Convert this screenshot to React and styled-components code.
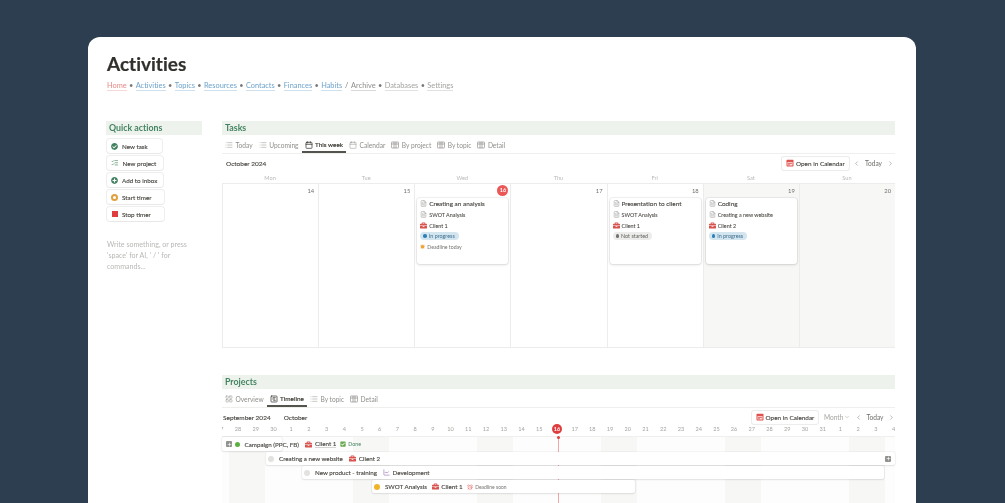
import React from "react";
import styled, { createGlobalStyle } from "styled-components";
import {
  List,
  FileText,
  Calendar as CalendarIcon,
  ChevronLeft,
  ChevronRight,
  ChevronDown,
  LayoutGrid,
  SquareChartGantt,
  ListChecks,
  ChartLine,
  Plus,
  AlarmClock,
} from "lucide-react";
import { FaBriefcase, FaCheckCircle, FaPlusCircle, FaCheckSquare } from "react-icons/fa";

const GlobalStyle = createGlobalStyle`
  html, body {
    margin: 0;
    height: 503px;
    overflow: hidden;
    background: #2c3e50;
    font-family: Lato, "Noto Sans", sans-serif;
    font-variant-ligatures: none;
    color: #37352f;
  }
`;

const Page = styled.div`
  padding: 37px 89px 0 88px;
`;

const Sheet = styled.main`
  background: #fff;
  border-radius: 12px 12px 0 0;
  padding: 15px 21px 0 18px;
  height: 451px;
  overflow: hidden;
`;

// no background of its own, so small text gets plain grey antialiasing
const TextLayer = styled.div`
  will-change: transform;
`;

const Title = styled.h1`
  margin: 0 0 0 1px;
  font-size: 19px;
  line-height: 24px;
  font-weight: 700;
  color: #32302c;
  -webkit-text-stroke: 0.2px #32302c;
`;

const Crumbs = styled.nav`
  display: flex;
  align-items: center;
  margin: 4px 0 0 1px;
  height: 11px;
  font-size: 7.4px;
`;

const Crumb = styled.a`
  color: ${(p) => p.$color};
  border-bottom: 1px solid ${(p) => p.$color}55;
  line-height: 9px;
`;

const Sep = styled.span`
  color: #777;
  width: 9px;
  text-align: center;
`;

const Columns = styled.div`
  display: flex;
  gap: 20px;
  margin-top: 30px;
`;

const Sidebar = styled.aside`
  width: 96px;
  flex: none;
`;

const Content = styled.div`
  flex: 1;
  min-width: 0;
`;

const Heading = styled.h2`
  margin: 0;
  height: 14px;
  padding-left: 3px;
  background: #edf3ec;
  color: #448361;
  font-size: 8.8px;
  line-height: 14.5px;
  font-weight: 700;
`;

const ActionList = styled.div`
  display: flex;
  flex-direction: column;
  align-items: flex-start;
  gap: 3px;
  margin: 4px 0 0 1px;
`;

const ActionButton = styled.button`
  display: flex;
  align-items: center;
  gap: 4px;
  height: 14px;
  width: ${(p) => p.$width}px;
  padding: 0 0 0 4px;
  border: 0;
  border-radius: 3px;
  background: #fff;
  box-shadow: 0 0 0 1px rgba(15, 15, 15, 0.07), 0 1px 1px rgba(15, 15, 15, 0.03);
  font: 400 6.3px Lato, sans-serif;
  -webkit-text-stroke: 0.12px #4a4843;
  color: #4a4843;
`;

const TimerRing = styled.span`
  width: 7px;
  height: 7px;
  border-radius: 50%;
  border: 2px solid #e2a03f;
  box-sizing: border-box;
  background: #fff;
`;

const StopSquare = styled.span`
  width: 6px;
  height: 6px;
  margin: 0 0.5px;
  background: #e03e3e;
`;

const Hint = styled.p`
  margin: 18px 0 0 1px;
  font-size: 7.1px;
  line-height: 11px;
  color: #b9b8b5;
`;

const Tabs = styled.div`
  display: flex;
  height: 15px;
  margin-top: 3px;
  border-bottom: 1px solid #efefee;
`;

const Tab = styled.div`
  display: flex;
  align-items: center;
  gap: 2.5px;
  height: 15px;
  padding: 0 3px 2px;
  box-sizing: border-box;
  font-size: ${(p) => (p.$active ? 6.4 : 6.6)}px;
  color: ${(p) => (p.$active ? "#37352f" : "#8f8e8b")};
  -webkit-text-stroke: ${(p) => (p.$active ? "0.15px #37352f" : "0")};
  box-shadow: ${(p) => (p.$active ? "inset 0 -2px 0 #55534e" : "none")};
`;

const MonthBar = styled.div`
  display: flex;
  align-items: center;
  justify-content: space-between;
  height: 14px;
  margin-top: ${(p) => p.$top}px;
  padding: 0 ${(p) => p.$right}px 0 ${(p) => p.$left}px;
`;

const MonthLabels = styled.div`
  display: flex;
  gap: 13px;
  font-size: 6.5px;
  -webkit-text-stroke: 0.12px #4a4843;
  color: #4a4843;
`;

const MonthTools = styled.div`
  display: flex;
  align-items: center;
  gap: 4.5px;
  font-size: 6.6px;
  color: #6f6e69;
`;

const CalendarButton = styled.button`
  display: flex;
  align-items: center;
  gap: 2px;
  height: 13px;
  padding: 0 4px;
  border: 0;
  border-radius: 2px;
  background: #fff;
  box-shadow: 0 0 0 1px rgba(15, 15, 15, 0.08);
  font: 400 6.4px Lato, sans-serif;
  -webkit-text-stroke: 0.12px #4a4843;
  color: #4a4843;
`;

const ViewSelect = styled.span`
  display: flex;
  align-items: center;
  gap: 1px;
  margin-left: 1px;
  color: #a5a4a0;
`;

const WeekHead = styled.div`
  display: grid;
  grid-template-columns: repeat(7, 1fr);
  height: 12px;
  margin-top: 1px;
  font-size: 5.6px;
  line-height: 14px;
  text-align: center;
  color: #b9b8b5;
`;

const WeekGrid = styled.div`
  display: grid;
  grid-template-columns: repeat(7, 1fr);
  height: 165px;
  border-top: 1px solid #ececea;
  border-bottom: 1px solid #ececea;
  box-sizing: border-box;
`;

const DayCell = styled.div`
  border-left: 1px solid #ececea;
  background: ${(p) => (p.$weekend ? "#f7f7f5" : "#fff")};
  padding: 0 2px;
  min-width: 0;
`;

const DayNumber = styled.div`
  display: flex;
  justify-content: flex-end;
  align-items: center;
  height: 12px;
  margin-bottom: 2px;
  padding-right: 2px;
  font-size: 5.8px;
  color: #6f6e69;
`;

const TodayBadge = styled.span`
  display: flex;
  align-items: center;
  justify-content: center;
  width: 11px;
  height: 11px;
  margin-right: -2px;
  border-radius: 50%;
  background: #eb5757;
  color: #fff;
  font-size: 5.4px;
  font-weight: 700;
`;

const TaskCard = styled.article`
  height: 66px;
  box-sizing: border-box;
  padding: 0 3px;
  border-radius: 3px;
  background: #fff;
  box-shadow: 0 0 0 1px rgba(15, 15, 15, 0.05), 0 1px 3px rgba(15, 15, 15, 0.12);
`;

const CardLine = styled.div`
  display: flex;
  align-items: center;
  gap: 2px;
  height: ${(p) => p.$height || 11}px;
  font-size: ${(p) => (p.$title ? "6.4px" : "5.4px")};
  -webkit-text-stroke: ${(p) => (p.$title ? "0.12px" : "0.06px")} #4a4843;
  white-space: nowrap;
  color: #4a4843;
`;

const Pill = styled.span`
  display: inline-flex;
  align-items: center;
  gap: 2px;
  height: 8px;
  padding: 0 4px 0 3px;
  border-radius: 4px;
  background: ${(p) => p.$bg};
  color: ${(p) => p.$color};
  -webkit-text-stroke: 0;
  font-size: 5.4px;
`;

const Dot = styled.span`
  flex: none;
  width: ${(p) => p.$size}px;
  height: ${(p) => p.$size}px;
  border-radius: 50%;
  background: ${(p) => p.$color};
`;

const Deadline = styled.span`
  display: flex;
  align-items: center;
  gap: 2px;
  font-size: 5.2px;
  -webkit-text-stroke: 0;
  color: #73726e;
`;

const ProjectsBlock = styled.section`
  margin-top: 27px;
`;

const RulerClip = styled.div`
  overflow: hidden;
  height: 13px;
  margin-top: -1px;
  border-bottom: 1px solid #efefee;
`;

const Ruler = styled.div`
  display: flex;
  margin-left: -10.6px;
  width: 700px;
`;

const RulerDay = styled.span`
  flex: none;
  width: 17.72px;
  height: 11px;
  display: flex;
  align-items: center;
  justify-content: center;
  font-size: 5.6px;
  color: #a5a4a0;
`;

const RulerToday = styled(TodayBadge)`
  margin: 0;
  background: #e03e3e;
  width: 10px;
  height: 10px;
`;

const Lane = styled.div`
  position: relative;
  height: 70px;
  background: #fdfdfd;
`;

const WeekendBand = styled.div`
  position: absolute;
  top: 0;
  bottom: 0;
  width: 35.5px;
  left: ${(p) => p.$start}px;
  background: #f7f7f5;
`;

const TodayLine = styled.div`
  position: absolute;
  top: 0;
  bottom: 0;
  left: 336px;
  width: 1px;
  background: #f0a9a9;

  &::before {
    content: "";
    position: absolute;
    top: -1px;
    left: -1px;
    width: 3px;
    height: 3px;
    border-radius: 50%;
    background: #e03e3e;
  }
`;

const BarRow = styled.div`
  position: relative;
  display: flex;
  align-items: center;
  gap: 2.5px;
  box-sizing: border-box;
  height: ${(p) => (p.$tall ? 14 : 13)}px;
  margin: 0 0 1px ${(p) => p.$start}px;
  width: ${(p) => p.$width}px;
  padding-left: ${(p) => p.$pad || 2}px;
  border-radius: 2px;
  background: #fff;
  box-shadow: 0 0 0 1px rgba(15, 15, 15, 0.04), 0 1px 2px rgba(15, 15, 15, 0.08);
  font-size: 6.25px;
  -webkit-text-stroke: 0.12px #4a4843;
  white-space: nowrap;
  color: #4a4843;
`;

const ExpandBox = styled.span`
  display: flex;
  align-items: center;
  justify-content: center;
  flex: none;
  width: 6px;
  height: 6px;
  border-radius: 1px;
  background: #91918e;
  color: #fff;
`;

const RowEnd = styled(ExpandBox)`
  position: absolute;
  right: 4px;
  top: 3.5px;
`;

const Underlined = styled.span`
  border-bottom: 1px solid #d5d4d2;
`;

const Status = styled.span`
  display: flex;
  align-items: center;
  gap: 2px;
  margin-left: ${(p) => p.$lead}px;
  font-size: ${(p) => p.$size}px;
  -webkit-text-stroke: 0;
  color: ${(p) => p.$color};
`;

const Gap = styled.span`
  width: ${(p) => p.$w}px;
  flex: none;
`;

const TableGlyph = ({ color = "#8f8e8b" }) => (
  <svg width="8" height="8" viewBox="0 0 8 8" fill="none" stroke={color} strokeWidth="0.7">
    <rect x="0.4" y="1" width="7.2" height="6" rx="0.7" />
    <path d="M3 1v6M5 1v6M0.4 3h7.2" />
  </svg>
);

const taskTabs = [
  { label: "Today", icon: List },
  { label: "Upcoming", icon: List },
  { label: "This week", icon: CalendarIcon, active: true },
  { label: "Calendar", icon: CalendarIcon },
  { label: "By project", icon: TableGlyph },
  { label: "By topic", icon: TableGlyph },
  { label: "Detail", icon: TableGlyph },
];

const projectTabs = [
  { label: "Overview", icon: LayoutGrid },
  { label: "Timeline", icon: SquareChartGantt, active: true },
  { label: "By topic", icon: List },
  { label: "Detail", icon: TableGlyph },
];

const crumbs = [
  ["Home", "#e58a86"],
  ["Activities", "#6ea3cc"],
  ["Topics", "#6ea3cc"],
  ["Resources", "#6ea3cc"],
  ["Contacts", "#6ea3cc"],
  ["Finances", "#6ea3cc"],
  ["Habits", "#6ea3cc"],
  ["Archive", "#8f8e8b"],
  ["Databases", "#a5a4a0"],
  ["Settings", "#a5a4a0"],
];

const weekDays = [
  { name: "Mon", date: 14 },
  { name: "Tue", date: 15 },
  {
    name: "Wed",
    date: 16,
    today: true,
    task: { title: "Creating an analysis", parent: "SWOT Analysis", client: "Client 1", status: "progress", deadline: true },
  },
  { name: "Thu", date: 17 },
  {
    name: "Fri",
    date: 18,
    task: { title: "Presentation to client", parent: "SWOT Analysis", client: "Client 1", status: "idle" },
  },
  {
    name: "Sat",
    date: 19,
    weekend: true,
    task: { title: "Coding", parent: "Creating a new website", client: "Client 2", status: "progress" },
  },
  { name: "Sun", date: 20, weekend: true },
];

const rulerDays = [
  27, 28, 29, 30,
  ...Array.from({ length: 31 }, (_, i) => i + 1),
  1, 2, 3, 4,
];

const weekendStarts = [7, 131, 255, 379, 503, 627];

const RedCalendar = () => (
  <svg width="8" height="8" viewBox="0 0 16 16">
    <rect x="1" y="1.5" width="14" height="13.5" rx="1.5" fill="#e0524f" />
    <rect x="3" y="6" width="10" height="7" fill="#fbe3e2" />
    <rect x="4.5" y="7.5" width="3" height="2.5" fill="#e0524f" />
    <rect x="8.5" y="7.5" width="3" height="2.5" fill="#e0524f" />
    <rect x="4.5" y="10.5" width="3" height="2" fill="#e0524f" />
  </svg>
);

const Briefcase = ({ size = 7 }) => <FaBriefcase size={size} color="#d9534f" style={{ flex: "none" }} />;

const Doc = ({ size = 7 }) => <FileText size={size} color="#8f8e8b" strokeWidth={1.6} style={{ flex: "none" }} />;

const TabStrip = ({ items }) => (
  <Tabs>
    {items.map((t) => (
      <Tab key={t.label} $active={t.active}>
        <t.icon size={8} strokeWidth={t.active ? 2.2 : 1.5} />
        {t.label}
      </Tab>
    ))}
  </Tabs>
);

const Task = ({ task }) => (
  <TaskCard>
    <CardLine $title>
      <Doc />
      {task.title}
    </CardLine>
    <CardLine>
      <Doc />
      {task.parent}
    </CardLine>
    <CardLine>
      <Briefcase />
      {task.client}
    </CardLine>
    <CardLine $height={10}>
      {task.status === "progress" ? (
        <Pill $bg="#d3e5ef" $color="#3f6f8f">
          <Dot $size={3.5} $color="#2f80b5" />
          In progress
        </Pill>
      ) : (
        <Pill $bg="#ececea" $color="#5f5e5a">
          <Dot $size={3.5} $color="#73726e" />
          Not started
        </Pill>
      )}
    </CardLine>
    {task.deadline && (
      <CardLine>
        <Deadline>
          <AlarmClock size={5} color="#f2a33a" fill="#f2a33a" />
          Deadline today
        </Deadline>
      </CardLine>
    )}
  </TaskCard>
);

export default function App() {
  return (
    <Page>
      <GlobalStyle />
      <Sheet>
        <TextLayer>
          <Title>Activities</Title>
          <Crumbs>
            {crumbs.map(([label, color], i) => (
              <React.Fragment key={label}>
                {i > 0 && <Sep>{label === "Archive" ? "/" : "•"}</Sep>}
                <Crumb $color={color}>{label}</Crumb>
              </React.Fragment>
            ))}
          </Crumbs>

          <Columns>
            <Sidebar>
              <Heading>Quick actions</Heading>
              <ActionList>
                <ActionButton $width={55}>
                  <FaCheckCircle size={7} color="#448361" />
                  New task
                </ActionButton>
                <ActionButton $width={56}>
                  <ListChecks size={7.5} color="#448361" strokeWidth={2} />
                  New project
                </ActionButton>
                <ActionButton $width={56}>
                  <FaPlusCircle size={7} color="#448361" />
                  Add to inbox
                </ActionButton>
                <ActionButton $width={57}>
                  <TimerRing />
                  Start timer
                </ActionButton>
                <ActionButton $width={57}>
                  <StopSquare />
                  Stop timer
                </ActionButton>
              </ActionList>
              <Hint>
                Write something, or press
                <br />
                'space' for AI, ' / ' for
                <br />
                commands...
              </Hint>
            </Sidebar>

            <Content>
              <Heading>Tasks</Heading>
              <TabStrip items={taskTabs} />
              <MonthBar $top={2} $left={4} $right={1.5}>
                <MonthLabels>October 2024</MonthLabels>
                <MonthTools>
                  <CalendarButton>
                    <RedCalendar />
                    Open in Calendar
                  </CalendarButton>
                  <ChevronLeft size={7} color="#8f8e8b" />
                  Today
                  <ChevronRight size={7} color="#8f8e8b" />
                </MonthTools>
              </MonthBar>
              <WeekHead>
                {weekDays.map((d) => (
                  <span key={d.name}>{d.name}</span>
                ))}
              </WeekHead>
              <WeekGrid>
                {weekDays.map((d) => (
                  <DayCell key={d.name} $weekend={d.weekend}>
                    <DayNumber>{d.today ? <TodayBadge>{d.date}</TodayBadge> : d.date}</DayNumber>
                    {d.task && <Task task={d.task} />}
                  </DayCell>
                ))}
              </WeekGrid>

              <ProjectsBlock>
                <Heading>Projects</Heading>
                <TabStrip items={projectTabs} />
                <MonthBar $top={2} $left={1} $right={0}>
                  <MonthLabels>
                    <span>September 2024</span>
                    <span>October</span>
                  </MonthLabels>
                  <MonthTools>
                    <CalendarButton>
                      <RedCalendar />
                      Open in Calendar
                    </CalendarButton>
                    <ViewSelect>
                      Month
                      <ChevronDown size={6} />
                    </ViewSelect>
                    <ChevronLeft size={7} color="#8f8e8b" />
                    Today
                    <ChevronRight size={7} color="#8f8e8b" />
                  </MonthTools>
                </MonthBar>
                <RulerClip>
                  <Ruler>
                    {rulerDays.map((day, i) => (
                      <RulerDay key={i}>{i === 19 ? <RulerToday>{day}</RulerToday> : day}</RulerDay>
                    ))}
                  </Ruler>
                </RulerClip>
                <Lane>
                  {weekendStarts.map((start) => (
                    <WeekendBand key={start} $start={start} />
                  ))}
                  <TodayLine />
                  <BarRow $start={0} $width={60} $pad={4} $tall>
                    <ExpandBox>
                      <Plus size={5} strokeWidth={3} />
                    </ExpandBox>
                    <Dot $size={5} $color="#5cb040" />
                    <Gap $w={0} />
                    Campaign (PPC, FB)
                    <Gap $w={1.5} />
                    <Briefcase />
                    <Underlined>Client 1</Underlined>
                    <Status $color="#448361" $size={5.3} $lead={1.5}>
                      <FaCheckSquare size={6} color="#6aa84f" />
                      Done
                    </Status>
                  </BarRow>
                  <BarRow $start={44} $width={629}>
                    <Dot $size={6} $color="#e3e2e0" />
                    <Gap $w={0} />
                    Creating a new website
                    <Gap $w={1.5} />
                    <Briefcase />
                    Client 2
                    <RowEnd>
                      <Plus size={5} strokeWidth={3} />
                    </RowEnd>
                  </BarRow>
                  <BarRow $start={80} $width={582}>
                    <Dot $size={6} $color="#e3e2e0" />
                    <Gap $w={0} />
                    New product - training
                    <Gap $w={1} />
                    <ChartLine size={7} color="#9065b0" />
                    Development
                  </BarRow>
                  <BarRow $start={150} $width={263}>
                    <Dot $size={6} $color="#f0b429" />
                    <Gap $w={0} />
                    SWOT Analysis
                    <Gap $w={0} />
                    <Briefcase />
                    Client 1
                    <Status $color="#73726e" $size={5} $lead={2}>
                      <AlarmClock size={6} color="#e0524f" />
                      Deadline soon
                    </Status>
                  </BarRow>
                </Lane>
              </ProjectsBlock>
            </Content>
          </Columns>
        </TextLayer>
      </Sheet>
    </Page>
  );
}
